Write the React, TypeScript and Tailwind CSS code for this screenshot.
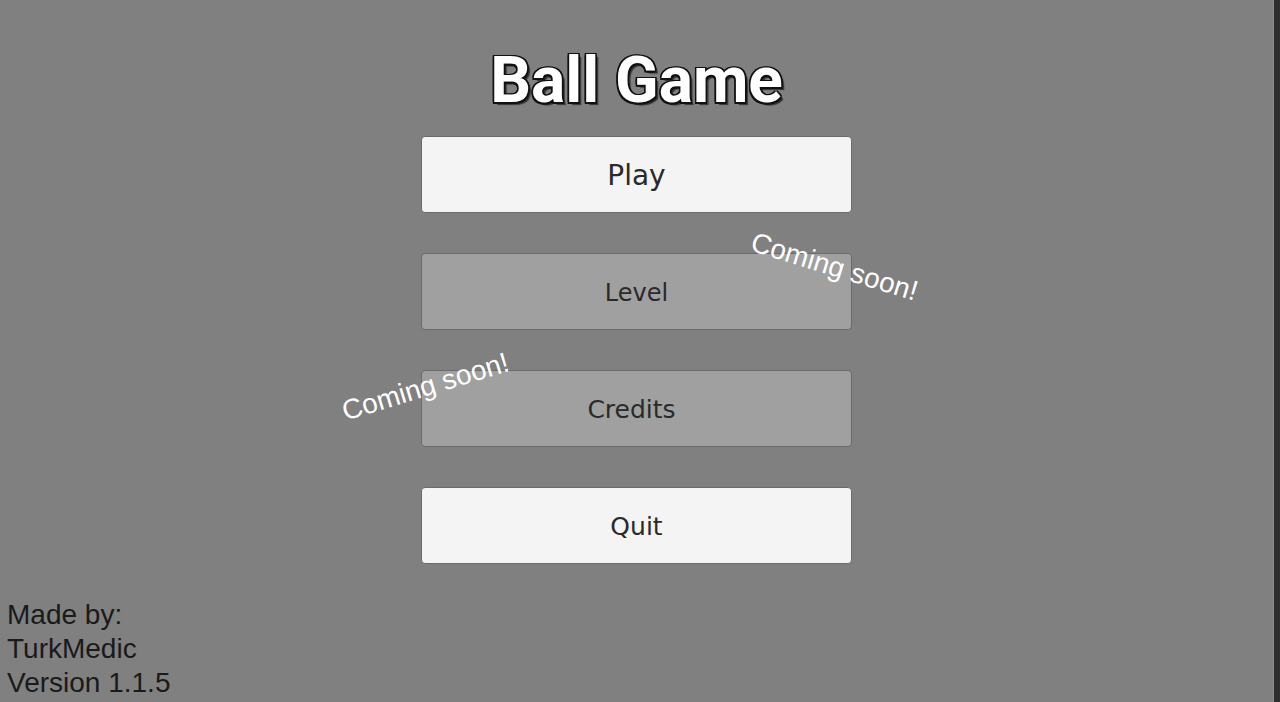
import React from 'react';

type MenuItem = {
  label: string;
  enabled: boolean;
  textClass: string;
};

const items: MenuItem[] = [
  { label: 'Play', enabled: true, textClass: 'text-[28px]' },
  { label: 'Level', enabled: false, textClass: 'text-[24px]' },
  { label: 'Credits', enabled: false, textClass: 'text-[25px] pr-[10px]' },
  { label: 'Quit', enabled: true, textClass: 'text-[25px]' },
];

function MenuButton({ item }: { item: MenuItem }) {
  return (
    <button
      className={`w-[431px] h-[77px] pt-[3px] rounded-[4px] border border-[#6b6b6b] flex items-center justify-center text-[#2a2a2a] ${
        item.enabled ? 'bg-[#f4f4f4]' : 'bg-[#a0a0a0]'
      }`}
      style={{ fontFamily: '"DejaVu Sans", Verdana, sans-serif' }}
    >
      <span className={item.textClass}>{item.label}</span>
    </button>
  );
}

function ComingSoon({ rotate }: { rotate: string }) {
  return (
    <span
      className={`absolute whitespace-nowrap text-white text-[28px] leading-none ${rotate}`}
      style={{ fontFamily: '"Liberation Sans", Arial, sans-serif' }}
    >
      Coming soon!
    </span>
  );
}

export default function App() {
  return (
    <div className="h-[702px] w-full flex bg-[#808080] overflow-hidden">
      <div className="flex-1 flex flex-col">
        <div className="flex flex-col items-center pt-[49px]">
          <h1
            className="text-[64px] leading-none font-bold text-white"
            style={{
              fontFamily: 'Roboto, "Liberation Sans", sans-serif',
              textShadow:
                '-1.5px -1.5px 0 #111, 1.5px -1.5px 0 #111, -1.5px 1.5px 0 #111, 1.5px 1.5px 0 #111, 0 -1.5px 0 #111, 0 1.5px 0 #111, -1.5px 0 0 #111, 1.5px 0 0 #111, 3px 3px 1px #333',
            }}
          >
            Ball Game
          </h1>

          <div className="mt-[23px] flex flex-col gap-[40px] relative">
            {items.map((item) => (
              <div key={item.label} className="relative">
                <MenuButton item={item} />
                {item.label === 'Level' && (
                  <div className="absolute left-[328px] top-[-6px] w-[170px] h-[40px] flex items-center justify-center">
                    <ComingSoon rotate="rotate-[17deg]" />
                  </div>
                )}
                {item.label === 'Credits' && (
                  <div className="absolute left-[-83px] top-[-3px] w-[174px] h-[40px] flex items-center justify-center">
                    <ComingSoon rotate="-rotate-[17deg]" />
                  </div>
                )}
              </div>
            ))}
          </div>
        </div>

        <div
          className="mt-auto pl-[7px] pb-[2px] text-[28px] leading-[34px] text-[#1a1a1a]"
          style={{ fontFamily: '"Liberation Sans", Arial, sans-serif' }}
        >
          <div>Made by:</div>
          <div>TurkMedic</div>
          <div>Version 1.1.5</div>
        </div>
      </div>

      <div className="w-[1px] bg-[#8e8e8e]" />
      <div className="w-[6px] bg-[#2e2e2e]" />
    </div>
  );
}
